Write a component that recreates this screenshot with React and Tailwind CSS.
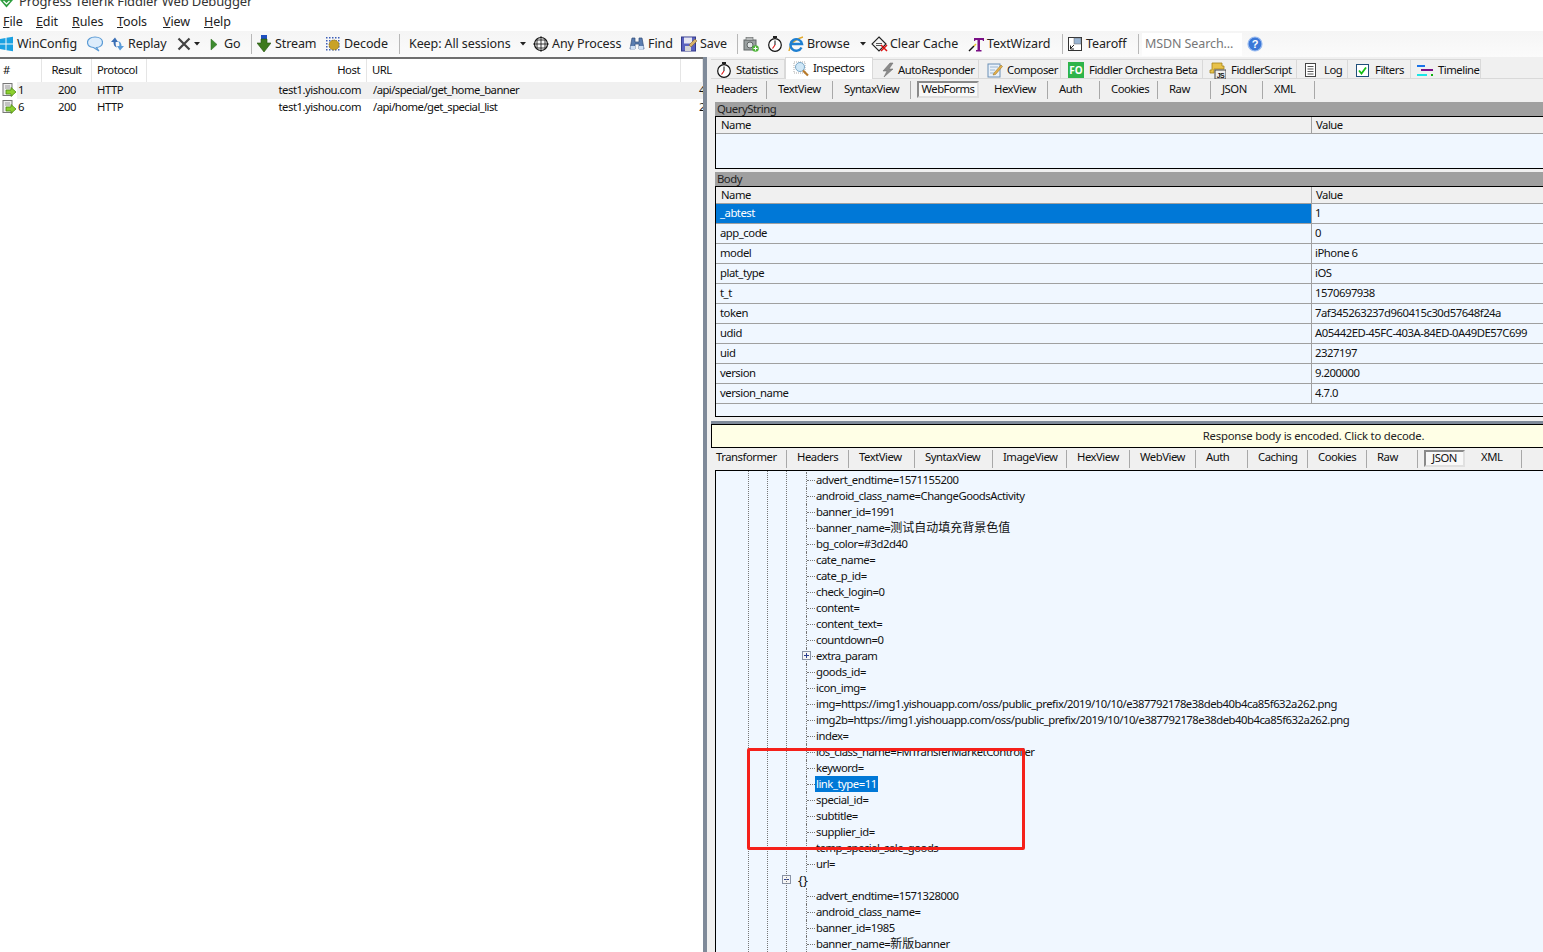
import React from "react";

const S = ({ w = 16, h = 16, vb, children, className = "" }) => (
  <svg width={w} height={h} viewBox={vb || `0 0 ${w} ${h}`} className={"shrink-0 " + className}>{children}</svg>
);

const Win = () => (<S w={13} h={16}><path d="M0 3 5.500 2v5.500H0zM6.500 1.800 13 .8v6.700H6.500zM0 8.500h5.500V14L0 13zM6.500 8.500H13v6.700l-6.500-1z" fill="#1ba1e2" /></S>);
const Chat = () => (<S><path d="M8 1c4.200 0 7.500 2 7.500 5.300S12.500 11.500 9.500 11.500l2.500 3.500-5.500-3.500C3.500 11.300.5 9.600.5 6.300.5 3 3.800 1 8 1z" fill="#dcecfb" stroke="#5b9bd5" strokeWidth="1.200" /></S>);
const Replay = () => (<S w={15} h={16}><path d="M5 1.500 1 6h2.500c0 3 1 5 3.500 5.500C5.800 10 5.500 8.500 5.700 6H8z" fill="#3b6fb5" /><path d="M10 14.500 14 10h-2.500c0-2.500-1-4.500-3.500-5 1.200 1.500 1.500 3 1.300 5H7z" fill="#5a9bd8" /></S>);
const X = () => (<S w={14} h={14}><path d="M1.500 1.500l11 11M12.500 1.500l-11 11" stroke="#444" strokeWidth="2.200" /></S>);
const Caret = () => (<S w={6} h={4}><path d="M0 0h6L3 3.500z" fill="#222" /></S>);
const Play = () => (<S w={8} h={13}><path d="M1 1l6 5.500L1 12z" fill="#3d8b2f" stroke="#2c6b20" strokeWidth=".5" /></S>);
const Stream = () => (<S w={14} h={18}><path d="M4 0h6v4H4z" fill="#1f50c0" /><path d="M4 4h6v4h4l-7 9-7-9h4z" fill="#3d7a1c" stroke="#24520e" strokeWidth=".6" /></S>);
const Decode = () => (
  <S w={16} h={16}>
    <g fill="#3d5fb8">{[1, 4, 7, 10, 13].flatMap((x) => [1, 4, 7, 10, 13].map((y) => (<rect key={x + "-" + y} x={x} y={y} width="1.500" height="1.500" />)))}</g>
    <circle cx="9" cy="9" r="5" fill="#c9a227" stroke="#8a6d10" strokeWidth=".8" strokeDasharray="1.500 1" />
  </S>
);
const Target = () => (<S><circle cx="8" cy="8" r="6.500" fill="none" stroke="#111" strokeWidth="1.200" /><path d="M8 0v16M0 8h16M4 3.500v9M12 3.500v9M3.500 4h9M3.500 12h9" stroke="#111" strokeWidth=".8" fill="none" /></S>);
const Binoc = () => (<S><path d="M3 2h3v4h4V2h3l2 11H10V8H6v5H1z" fill="#5a7db0" stroke="#2f4a78" strokeWidth=".7" /><rect x="1.500" y="10" width="4.500" height="3.500" fill="#cfe0f5" /><rect x="10" y="10" width="4.500" height="3.500" fill="#cfe0f5" /></S>);
const Save = () => (<S><rect x=".5" y="1" width="14" height="14" fill="#5a62c0" stroke="#343a8a" /><rect x="3" y="1.500" width="8" height="6" fill="#e6e6f2" /><rect x="4" y="10" width="6" height="5" fill="#d5d5d5" /><path d="M8 9l6-6 2 2-6 6z" fill="#d8b26a" stroke="#7d5c1f" strokeWidth=".5" /></S>);
const Camera = () => (<S><rect x="1" y="4" width="12" height="10" fill="#9aa0a0" stroke="#5f6464" /><rect x="3" y="1.500" width="7" height="3" fill="#b5b8b8" stroke="#5f6464" strokeWidth=".6" /><circle cx="7" cy="9" r="3" fill="#dfe4e4" stroke="#5f6464" /><circle cx="12.500" cy="12.500" r="3.300" fill="#4fb53a" /><path d="M12.500 10.500v4M10.500 12.500h4" stroke="#fff" strokeWidth="1" /></S>);
const Watch = () => (<S><rect x="6" y="0" width="4" height="2" fill="#222" /><circle cx="8" cy="9" r="6.300" fill="#fff" stroke="#111" strokeWidth="1.200" /><path d="M8 9V4.500" stroke="#111" /><path d="M8 9 5.500 12.500" stroke="#d11" strokeWidth="1.100" /></S>);
const IE = () => (<S><path d="M1 15C2 8 7 3 15 1" fill="none" stroke="#e2a92b" strokeWidth="1.400" /><path d="M13.500 11.500A5.800 5.800 0 1 1 14 8H3.500" fill="none" stroke="#1e7fd1" strokeWidth="2.400" /></S>);
const Clear = () => (<S w={18} h={16}><path d="M8 1l7 7-7 7-7-7z" fill="#f4f4f4" stroke="#222" strokeWidth="1.100" /><path d="M5 7.500h6M5 9.500h6" stroke="#555" /><path d="M10 9l6 6M16 9l-6 6" stroke="#d11" strokeWidth="1.500" /></S>);
const TW = () => (<S><path d="M6 2h10v3h-1l-.5-1H12v10h1.500v1.500H8V14h1.500V4H7.500L7 5H6z" fill="#7a0f86" /><path d="M1 15l5-5" stroke="#111" strokeWidth="1.500" /><path d="M6 10l2-2" stroke="#e8c52a" strokeWidth="1.500" /></S>);
const Tear = () => (<S><rect x=".5" y="1.500" width="13" height="13" fill="#fff" stroke="#333" /><rect x="6" y="2" width="7" height="6" fill="#9ab5d3" stroke="#666" strokeWidth=".5" /><path d="M2 13l4-4M2.500 9.500V13H6" stroke="#222" fill="none" /></S>);
const Help = () => (<S><circle cx="8" cy="8" r="7" fill="#3c78d8" stroke="#9cbdf0" strokeWidth="1.200" /><text x="8" y="12" fontSize="11" fontWeight="700" textAnchor="middle" fill="#fff" fontFamily="Liberation Sans">?</text></S>);
const Sess = () => (<S w={17} h={15}><rect x="3" y=".5" width="9" height="12" fill="#eee" stroke="#777" /><path d="M5 3h5M5 5h5" stroke="#999" /><path d="M6 7h5V4.500l5 4.500-5 4.500V11H6z" fill="#8ccf2f" stroke="#4d8a12" strokeWidth=".8" /></S>);
const Insp = () => (<S><rect x="1" y="1" width="11" height="11" fill="#fff" stroke="#aaa" strokeDasharray="1 1" /><circle cx="7" cy="6" r="4.500" fill="#cfe7f7" stroke="#7aa7c7" /><path d="M10 9.500l5 5" stroke="#b87a2a" strokeWidth="2.200" /></S>);
const Bolt = () => (<S><path d="M10 1 3 9h4l-3 6 9-8H9l4-6z" fill="#8a8a8a" stroke="#666" strokeWidth=".5" /></S>);
const Compose = () => (<S><rect x="1" y="2" width="12" height="13" fill="#e9f1fa" stroke="#6b8fb5" /><path d="M3 5h8M3 8h5M3 11h4" stroke="#9db6cf" /><path d="M7 11l7-8 1.500 1.500-7 8L6 13z" fill="#e6b04a" stroke="#8a6a20" strokeWidth=".5" /></S>);
const FO = () => (<span className="flex h-4 w-4 shrink-0 items-center justify-center bg-[#2db44a] text-[10px] font-bold leading-none tracking-normal text-white">FO</span>);
const Script = () => (<S w={17} h={17}><path d="M3 1h10v3h2v3H5v4H1V8h2z" fill="#e8c24a" stroke="#a5831b" strokeWidth=".8" /><rect x="6" y="8" width="11" height="9" fill="#eee" stroke="#444" /><text x="11.500" y="15.500" fontSize="7" fontWeight="700" textAnchor="middle" fill="#111" fontFamily="Liberation Sans">JS</text></S>);
const LogI = () => (<S w={12} h={14}><rect x=".5" y=".5" width="10" height="13" fill="#fff" stroke="#444" /><path d="M2.500 3.500h6M2.500 6h6M2.500 8.500h6M2.500 11h6" stroke="#555" /></S>);
const Filt = () => (<S w={13} h={13}><rect x=".5" y=".5" width="12" height="12" fill="#fff" stroke="#1f4f7a" /><path d="M3 6.500l2.500 3L10 3.500" stroke="#12c012" strokeWidth="1.800" fill="none" /></S>);
const TL = () => (<S w={17} h={13}><rect x="0" y="1" width="8" height="2" fill="#1a73e8" /><rect x="4" y="5" width="12" height="2" fill="#7a0f86" /><rect x="0" y="10" width="10" height="2" fill="#19e6e6" /><rect x="14" y="10" width="2" height="2" fill="#12b012" /></S>);

const Item = ({ icon, label, w, ml = 0, gap = 4 }) => (
  <div className="flex shrink-0 items-center" style={{ marginLeft: ml, gap }}>
    {icon}
    {label && <span className="whitespace-nowrap" style={{ width: w }}>{label}</span>}
  </div>
);
const Sep = ({ ml }) => <div className="h-[20px] w-px shrink-0 bg-[#b8b8b8]" style={{ marginLeft: ml }} />;

const Menu = ({ first, rest, w }) => (
  <span className="shrink-0" style={{ width: w }}><span className="underline">{first}</span>{rest}</span>
);

const Toolbar = () => (
  <div className="flex h-[26px] shrink-0 items-center bg-gradient-to-b from-[#f5f5f5] to-[#fbfbfb] text-[12.500px] tracking-[-0.1px] text-[#222]">
    <Item icon={<Win />} label="WinConfig" w={60} />
    <Item icon={<Chat />} ml={10} />
    <Item icon={<Replay />} label="Replay" w={40} ml={7} gap={3} />
    <Item icon={<X />} ml={9} />
    <Item icon={<Caret />} ml={3} />
    <Item icon={<Play />} label="Go" w={18} ml={10} gap={6} />
    <Sep ml={9} />
    <Item icon={<Stream />} label="Stream" w={42} ml={5} gap={4} />
    <Item icon={<Decode />} label="Decode" w={46} ml={8} gap={3} />
    <Sep ml={9} />
    <Item label="Keep: All sessions" w={104} ml={9} />
    <Item icon={<Caret />} ml={7} />
    <Item icon={<Target />} label="Any Process" w={71} ml={7} gap={3} />
    <Item icon={<Binoc />} label="Find" w={25} ml={6} gap={3} />
    <Item icon={<Save />} label="Save" w={28} ml={8} gap={3} />
    <Sep ml={9} />
    <Item icon={<Camera />} ml={5} />
    <Item icon={<Watch />} ml={8} />
    <Item icon={<IE />} label="Browse" w={44} ml={5} gap={3} />
    <Item icon={<Caret />} ml={9} />
    <Item icon={<Clear />} label="Clear Cache" w={70} ml={5} gap={1} />
    <Item icon={<TW />} label="TextWizard" w={66} ml={8} gap={3} />
    <Sep ml={9} />
    <Item icon={<Tear />} label="Tearoff" w={43} ml={5} gap={2} />
    <Sep ml={9} />
    <div className="ml-[3px] flex h-[23px] w-[100px] shrink-0 items-center bg-white pl-[3px] text-[#777]">MSDN Search...</div>
    <Item icon={<Help />} ml={5} />
  </div>
);

const Sessions = () => (
  <div className="h-full w-[703px] shrink-0 overflow-hidden border-t-2 border-[#6f6f6f] bg-white">
    <div className="flex h-[23px] items-center">
      {[["#", 42, "pl-[3px]"], ["Result", 50, "text-center"], ["Protocol", 55, "pl-[5px]"], ["Host", 220, "pr-[6px] text-right"], ["URL", 314, "pl-[5px]"], ["", 22, ""]].map(([t, w, c], i) => (
        <div key={i} className={"h-full shrink-0 border-r border-[#e5e5e5] leading-[21px] " + c} style={{ width: w }}>{t}</div>
      ))}
    </div>
    {[["1", "/api/special/get_home_banner", "4", true], ["6", "/api/home/get_special_list", "2", false]].map(([id, url, n, sel]) => (
      <div key={id} className="flex h-[17px] items-center leading-[15px]">
        <div className="flex h-full w-[42px] shrink-0 items-center"><Sess /><span className={"h-full flex-1 pl-[1px] " + (sel ? "bg-[#f0f0f0]" : "")}>{id}</span></div>
        <div className={"flex h-full flex-1 " + (sel ? "bg-[#f0f0f0]" : "")}>
          <div className="w-[50px] shrink-0 text-center">200</div>
          <div className="w-[55px] shrink-0 pl-[5px]">HTTP</div>
          <div className="w-[220px] shrink-0 pr-[6px] text-right">test1.yishou.com</div>
          <div className="w-[314px] shrink-0 whitespace-nowrap pl-[6px] tracking-[-0.55px]">{url}</div>
          <div className="w-[22px] shrink-0 pl-[18px]">{n}</div>
        </div>
      </div>
    ))}
  </div>
);

const mainTabs = [
  [<Watch />, "Statistics", 74, 5, 4],
  [<Insp />, "Inspectors", 88, 7, 4, true],
  [<Bolt />, "AutoResponder", 106, 7, 2],
  [<Compose />, "Composer", 82, 8, 4],
  [<FO />, "Fiddler Orchestra Beta", 142, 7, 5],
  [<Script />, "FiddlerScript", 94, 6, 5],
  [<LogI />, "Log", 51, 8, 7],
  [<Filt />, "Filters", 63, 8, 6],
  [<TL />, "Timeline", 70, 6, 4],
];

const MainTabs = () => (
  <div className="flex h-[22px] shrink-0 items-end border-b border-[#d9d9d9]">
    {mainTabs.map(([ic, t, w, pl, gap, active]) => (
      <div key={t} className={"flex shrink-0 items-center " + (active ? "-mb-px h-[22px] border-x border-t border-[#d9d9d9] bg-white" : "h-[19px] border-r border-t border-[#d9d9d9] bg-[#f0f0f0] pt-[2px]")} style={{ width: w, paddingLeft: pl, gap }}>
        {ic}<span className="whitespace-nowrap">{t}</span>
      </div>
    ))}
  </div>
);

const SubTabs = ({ tabs, lift }) => (
  <div className="flex h-[21px] shrink-0 items-center bg-[#f0f0f0]">
    {tabs.map(([t, w, boxed, pl]) => (
      <div key={t} className="flex h-full shrink-0 items-center" style={{ width: w }}>
        {boxed ? (
          <div className="flex h-[17px] items-center justify-center border-2 border-t-[#8a8a8a] border-l-[#8a8a8a] border-r-[#e0e0e0] border-b-[#e0e0e0] bg-[#f8f8f8]" style={{ marginLeft: pl, width: boxed }}>{t}</div>
        ) : (
          <div className="flex h-[18px] flex-1 items-center whitespace-nowrap border-r border-[#a8a8a8]" style={{ paddingLeft: pl, paddingBottom: lift }}>{t}</div>
        )}
      </div>
    ))}
  </div>
);

const reqTabs = [["Headers", 56, 0, 5], ["TextView", 66, 0, 11], ["SyntaxView", 78, 0, 11], ["WebForms", 73, 62, 6], ["HexView", 64, 0, 10], ["Auth", 52, 0, 11], ["Cookies", 58, 0, 11], ["Raw", 53, 0, 11], ["JSON", 52, 0, 11], ["XML", 52, 0, 11]];
const resTabs = [["Transformer", 76, 0, 5], ["Headers", 62, 0, 10], ["TextView", 66, 0, 10], ["SyntaxView", 78, 0, 10], ["ImageView", 74, 0, 10], ["HexView", 63, 0, 10], ["WebView", 66, 0, 10], ["Auth", 52, 0, 10], ["Caching", 60, 0, 10], ["Cookies", 59, 0, 10], ["Raw", 51, 0, 10], ["JSON", 52, 41, 6], ["XML", 52, 0, 11]];

const Band = ({ children }) => <div className="h-[14px] bg-[#a0a0a0] pl-[2px] leading-[13px] text-[#222]">{children}</div>;

const Head = () => (
  <div className="flex h-[17px] border-b border-[#a0a0a0] bg-[#f0f0f0] leading-[15px]">
    <div className="w-[596px] shrink-0 border-r border-[#a0a0a0] pl-[5px]">Name</div>
    <div className="pl-[4px]">Value</div>
  </div>
);

const form = [["_abtest", "1"], ["app_code", "0"], ["model", "iPhone 6"], ["plat_type", "iOS"], ["t_t", "1570697938"], ["token", "7af345263237d960415c30d57648f24a"], ["udid", "A05442ED-45FC-403A-84ED-0A49DE57C699"], ["uid", "2327197"], ["version", "9.200000"], ["version_name", "4.7.0"]];

const Req = () => (
  <div className="ml-[4px] flex h-[317px] shrink-0 flex-col">
    <div className="h-[2px]" />
    <Band>QueryString</Band>
    <div className="h-[53px] border-y border-l border-black bg-[#f0f7ff]"><Head /></div>
    <div className="h-[3px]" />
    <Band>Body</Band>
    <div className="h-[231px] border-y border-l border-black bg-[#f0f7ff]">
      <Head />
      {form.map(([k, v], i) => (
        <div key={k} className="flex h-[20px] border-b border-[#a0a0a0] leading-[17px]">
          <div className={"w-[596px] shrink-0 border-r border-[#a0a0a0] pl-[4px] " + (i === 0 ? "bg-[#0078d7] text-white" : "")}>{k}</div>
          <div className="whitespace-nowrap pl-[3px]">{v}</div>
        </div>
      ))}
    </div>
  </div>
);

const tree = [["advert_endtime=1571155200"], ["android_class_name=ChangeGoodsActivity"], ["banner_id=1991"], ["banner_name=", "测试自动填充背景色值"], ["bg_color=#3d2d40"], ["cate_name="], ["cate_p_id="], ["check_login=0"], ["content="], ["content_text="], ["countdown=0"], ["extra_param"], ["goods_id="], ["icon_img="], ["img=https://img1.yishouapp.com/oss/public_prefix/2019/10/10/e387792178e38deb40b4ca85f632a262.png"], ["img2b=https://img1.yishouapp.com/oss/public_prefix/2019/10/10/e387792178e38deb40b4ca85f632a262.png"], ["index="], ["ios_class_name=FMTransferMarketController"], ["keyword="], ["link_type=11"], ["special_id="], ["subtitle="], ["supplier_id="], ["temp_special_sale_goods"], ["url="], ["{}"], ["advert_endtime=1571328000"], ["android_class_name="], ["banner_id=1985"], ["banner_name=", "新版", "banner"]];

const Box = ({ plus }) => (
  <span className="absolute left-[-5px] top-[3px] flex h-[9px] w-[9px] items-center justify-center border border-[#8a94a6] bg-[#f5f5f5]">
    <span className="relative block h-px w-[5px] bg-[#2b3f8f]">{plus && <span className="absolute left-[2px] top-[-2px] block h-[5px] w-px bg-[#2b3f8f]" />}</span>
  </span>
);

const Tree = () => (
  <div className="relative ml-[4px] flex-1 overflow-hidden border-l border-t border-black bg-[#f0f7ff] pt-[1px]">
    {tree.map(([t, cjk, tail], i) => {
      if (t === "{}") {
        return (
          <div key={i} className="relative ml-[71px] flex h-[16px] items-center">
            <Box />
            <span className="ml-[11px] text-[13px] leading-none tracking-normal">{"{}"}</span>
          </div>
        );
      }
      const sel = t.startsWith("link_type");
      return (
        <div key={i} className="relative ml-[90px] flex h-[16px] items-center border-l border-dotted border-[#777]">
          <span className="w-[8px] shrink-0 border-t border-dotted border-[#777]" />
          {t === "extra_param" && <Box plus />}
          <span className={"whitespace-nowrap px-px leading-[16px] " + (sel ? "bg-[#0078d7] text-white" : "")}>
            {t}
            {cjk && <span className="text-[12px] tracking-normal">{cjk}</span>}
            {tail}
          </span>
        </div>
      );
    })}
    <div className="pointer-events-none absolute inset-y-0 left-[32px] border-l border-dotted border-[#777]" />
    <div className="pointer-events-none absolute inset-y-0 left-[51px] border-l border-dotted border-[#777]" />
    <div className="pointer-events-none absolute inset-y-0 left-[70px] border-l border-dotted border-[#777]" />
    <div className="absolute left-[31px] top-[277px] h-[102px] w-[278px] rounded-[2px] border-[3px] border-[#f5201a]" />
  </div>
);

export default function App() {
  return (
    <div className="flex h-[952px] w-[1543px] flex-col overflow-hidden bg-white font-['Noto_Sans','Noto_Sans_CJK_SC',sans-serif] text-[11.300px] tracking-[-0.48px] text-[#111]">
      <div className="flex h-[9px] shrink-0 items-start gap-[6px] overflow-hidden text-[13px] leading-[13px] tracking-[-0.13px] text-[#333]">
        <svg width="13" height="8" viewBox="0 0 13 8" className="shrink-0"><path d="M0 0h13L6.500 7.500z" fill="#2e9e3f" /><path d="M3.500 1l3 3 3-3" stroke="#fff" strokeWidth="1.200" fill="none" /></svg>
        <span className="-mt-[5px]">Progress Telerik Fiddler Web Debugger</span>
      </div>
      <div className="flex h-[22px] shrink-0 items-center pl-[3px] pt-[5px] text-[12.500px] tracking-[-0.1px] text-[#222]">
        <Menu first="F" rest="ile" w={33} />
        <Menu first="E" rest="dit" w={36} />
        <Menu first="R" rest="ules" w={45} />
        <Menu first="T" rest="ools" w={46} />
        <Menu first="V" rest="iew" w={41} />
        <Menu first="H" rest="elp" w={30} />
      </div>
      <Toolbar />
      <div className="flex min-h-0 flex-1">
        <Sessions />
        <div className="h-full w-[4px] shrink-0 bg-[#7f8a99]" />
        <div className="flex min-w-0 flex-1 flex-col overflow-hidden bg-[#f0f0f0] pl-[4px]">
          <MainTabs />
          <SubTabs tabs={reqTabs} lift={1} />
          <Req />
          <div className="h-[4px] shrink-0" />
          <div className="h-[3px] shrink-0 bg-[#7f8a99]" />
          <div className="flex h-[24px] shrink-0 items-center justify-center border border-r-0 border-black bg-[#ffffe6] pl-[372px] pt-[1px] tracking-[-0.2px] text-[#222]">Response body is encoded. Click to decode.</div>
          <SubTabs tabs={resTabs} lift={2} />
          <div className="h-[1px] shrink-0" />
          <Tree />
        </div>
      </div>
    </div>
  );
}
